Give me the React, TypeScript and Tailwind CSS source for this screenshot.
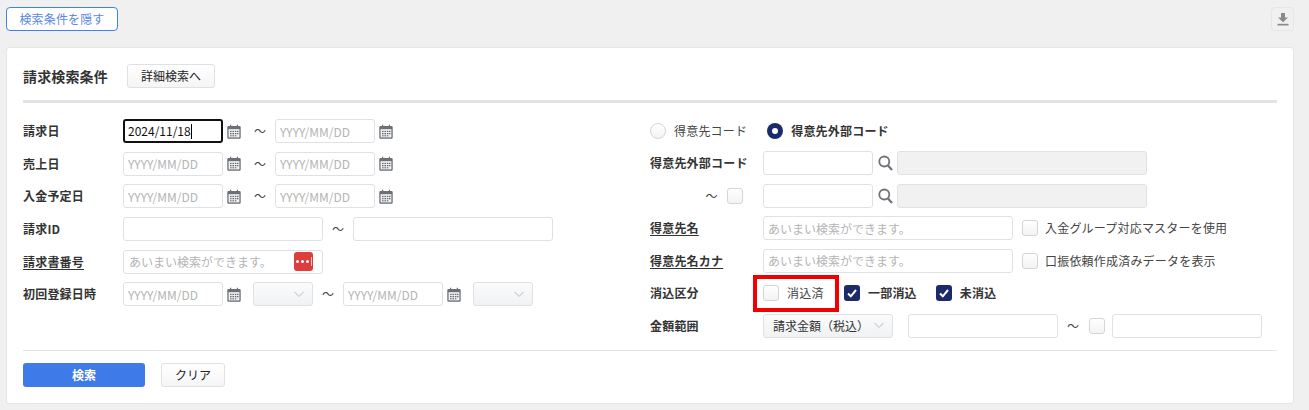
import React from "react";

const Cal = () => (
  <svg width="14" height="15" viewBox="0 0 14 15" className="block shrink-0">
    <path fill="#6b7076" d="M1.500 2H3V0.800h1.200V2h5.600V0.800H11V2h1.500A1.200 1.200 0 0 1 13.700 3.200v10.300a1.200 1.200 0 0 1-1.200 1.200h-11A1.200 1.200 0 0 1 .3 13.500V3.200A1.200 1.200 0 0 1 1.500 2z" />
    <rect x="1.600" y="5.200" width="10.800" height="8.200" fill="#f4f4f4" />
    <g fill="#6b7076">
      <rect x="3" y="6.800" width="1.600" height="1.300" /><rect x="5.400" y="6.800" width="1.600" height="1.300" /><rect x="7.800" y="6.800" width="1.600" height="1.300" /><rect x="10" y="6.800" width="1.500" height="1.300" />
      <rect x="3" y="9" width="1.600" height="1.300" /><rect x="5.400" y="9" width="1.600" height="1.300" /><rect x="7.800" y="9" width="1.600" height="1.300" /><rect x="10" y="9" width="1.500" height="1.300" />
      <rect x="3" y="11.200" width="1.600" height="1.200" /><rect x="5.400" y="11.200" width="1.600" height="1.200" /><rect x="7.800" y="11.200" width="1.600" height="1.200" />
    </g>
  </svg>
);

const Chevron = () => (
  <svg width="12" height="7" viewBox="0 0 12 7" fill="none" stroke="#cdd3dc" strokeWidth="1.200"><path d="M1.500 1 6 5.500 10.500 1" /></svg>
);

const Loupe = () => (
  <svg width="15" height="16" viewBox="0 0 15 16" fill="none" stroke="#6f7378" strokeWidth="1.800" className="block shrink-0"><circle cx="6.300" cy="6.500" r="5" /><path d="m10 10.500 4 4.500" strokeWidth="2.200" /></svg>
);

const Tilde = ({ className = "" }: { className?: string }) => (
  <span className={`shrink-0 text-center text-[12px] leading-none text-[#444] ${className}`}>～</span>
);

const Input = ({ w, ph, bg = "bg-white", className = "" }: { w: string; ph?: string; bg?: string; className?: string }) => (
  <input
    readOnly
    placeholder={ph}
    className={`${w} ${bg} ${className} h-6 shrink-0 rounded-[3px] border border-[#dfe1e5] px-[4px] text-xs outline-none placeholder:text-[#b4b4b4]`}
  />
);

const Label = ({ children, u, w = "w-[100px]" }: { children: React.ReactNode; u?: boolean; w?: string }) => (
  <span className={`${w} shrink-0 text-xs font-bold tracking-[0.2px] text-[#333] ${u ? "underline underline-offset-2" : ""}`}>{children}</span>
);

const Select = ({ w, text, className = "" }: { w: string; text?: string; className?: string }) => (
  <div className={`${w} ${className} flex h-6 shrink-0 items-center justify-between rounded-[3px] border border-[#dfe1e5] bg-gradient-to-b from-[#fbfbfc] to-[#f1f2f4] pl-[9px] pr-[7px] text-xs text-[#333]`}>
    <span>{text}</span>
    <Chevron />
  </div>
);

const Box = ({ checked, className = "" }: { checked?: boolean; className?: string }) =>
  checked ? (
    <span className={`${className} flex h-4 w-4 shrink-0 items-center justify-center rounded-[3px] bg-[#1b2a6b]`}>
      <svg width="10" height="9" viewBox="0 0 10 9" fill="none" stroke="#fff" strokeWidth="2"><path d="M1 4.500 3.800 7.300 9 1" /></svg>
    </span>
  ) : (
    <span className={`${className} block h-4 w-4 shrink-0 rounded-[3px] border border-[#d3d5d9] bg-gradient-to-b from-white to-[#f3f3f4]`} />
  );

const Text = ({ children, className = "ml-2" }: { children: React.ReactNode; className?: string }) => (
  <span className={`${className} text-xs tracking-[0.2px] text-[#444]`}>{children}</span>
);

const Strong = ({ children }: { children: React.ReactNode }) => (
  <span className="ml-2 text-xs font-bold tracking-[0.2px] text-[#333]">{children}</span>
);

const DateRange = ({ first }: { first?: boolean }) => (
  <>
    {first ? (
      <div className="flex h-6 w-[100px] shrink-0 items-center rounded-[3px] border-2 border-[#111] bg-white pl-[3px] text-xs text-[#111]">
        2024/11/18<span className="h-[15px] w-px bg-black" />
      </div>
    ) : (
      <Input w="w-[100px]" ph="YYYY/MM/DD" />
    )}
    <span className="ml-1"><Cal /></span>
    <Tilde className="ml-[12px] w-[14px]" />
    <Input w="w-[100px]" ph="YYYY/MM/DD" className="ml-[8px]" />
    <span className="ml-1"><Cal /></span>
  </>
);

const Row = ({ children }: { children: React.ReactNode }) => <div className="flex h-6 items-center">{children}</div>;

export default function App() {
  return (
    <div className="min-h-[410px] bg-[#f0f0f0] px-[6px] pt-[7px] text-[#333] [font-family:'Noto_Sans_CJK_JP','Noto_Sans',sans-serif]">
      <div className="flex items-center justify-between pr-[9px]">
        <button className="flex h-6 w-[112px] items-center justify-center rounded-[4px] border border-[#3f82ee] bg-white text-xs tracking-[0.15px] text-[#5b87e0]">検索条件を隠す</button>
        <button className="flex h-6 w-[23px] items-center justify-center rounded-[4px] border border-[#e6e6e6] bg-[#f0f0f0]">
          <svg width="12" height="13" viewBox="0 0 12 13" fill="#8a8a8a"><path d="M4 0h4v4.500h3L6 9.300 1 4.500h3z" /><rect x="0.500" y="10.800" width="11" height="1.700" /></svg>
        </button>
      </div>

      <div className="mt-4 h-[357px] w-[1288px] rounded-[3px] border border-[#e2e5ec] bg-white px-4">
        <div className="flex items-center pt-4">
          <span className="text-sm font-bold tracking-[0.15px] text-[#333]">請求検索条件</span>
          <button className="ml-[19px] h-6 w-[88px] rounded-[3px] border border-[#dfe1e5] bg-gradient-to-b from-white to-[#f5f5f6] text-xs text-[#222]">詳細検索へ</button>
        </div>
        <div className="mt-3 h-[3px] bg-[#e3e3e3]" />

        <div className="flex pt-4">
          <div className="mt-[0.3px] flex w-[627px] shrink-0 flex-col gap-[8.600px]">
            <Row><Label>請求日</Label><DateRange first /></Row>
            <Row><Label>売上日</Label><DateRange /></Row>
            <Row><Label>入金予定日</Label><DateRange /></Row>
            <Row>
              <Label>請求ID</Label>
              <Input w="w-[200px]" />
              <Tilde className="ml-[9px] w-[12px]" />
              <Input w="w-[200px]" className="ml-[9px]" />
            </Row>
            <Row>
              <Label u>請求書番号</Label>
              <div className="flex h-6 w-[200px] items-center justify-between rounded-[3px] border border-[#dfe1e5] pl-[5px] pr-[9px] text-xs text-[#b4b4b4]">
                <span>あいまい検索ができます。</span>
                <span className="flex h-[19px] w-[19px] items-center justify-center gap-[2px] rounded-[3px] bg-[#dc3d3d]">
                  <span className="h-[3px] w-[3px] rounded-full bg-white" /><span className="h-[3px] w-[3px] rounded-full bg-white" /><span className="h-[3px] w-[3px] rounded-full bg-white" /><span className="h-[9px] w-[1px] bg-[#f3c4c4]" />
                </span>
              </div>
            </Row>
            <Row>
              <Label>初回登録日時</Label>
              <Input w="w-[100px]" ph="YYYY/MM/DD" />
              <span className="ml-1"><Cal /></span>
              <Select w="w-[60px]" className="ml-3" />
              <Tilde className="ml-[9px] w-[12px]" />
              <Input w="w-[100px]" ph="YYYY/MM/DD" className="ml-[9px]" />
              <span className="ml-1"><Cal /></span>
              <Select w="w-[60px]" className="ml-3" />
            </Row>
          </div>

          <div className="-mt-[0.4px] flex flex-1 flex-col gap-[8.500px]">
            <Row>
              <span className="h-4 w-4 rounded-full border border-[#d3d5d9] bg-gradient-to-b from-white to-[#f3f3f4]" />
              <Text>得意先コード</Text>
              <span className="ml-[20px] flex h-4 w-4 items-center justify-center rounded-full bg-[#1b2a6b]"><span className="h-[6px] w-[6px] rounded-full bg-white" /></span>
              <Strong>得意先外部コード</Strong>
            </Row>
            <Row>
              <Label w="w-[113px]">得意先外部コード</Label>
              <Input w="w-[110px]" />
              <span className="ml-[5px]"><Loupe /></span>
              <Input w="w-[250px]" bg="bg-[#f1f1f1]" className="ml-1" />
            </Row>
            <Row>
              <Tilde className="ml-[55px] w-[13px]" />
              <Box className="ml-[9px]" />
              <Input w="w-[110px]" className="ml-5" />
              <span className="ml-[5px]"><Loupe /></span>
              <Input w="w-[250px]" bg="bg-[#f1f1f1]" className="ml-1" />
            </Row>
            <Row>
              <Label u w="w-[113px]">得意先名</Label>
              <Input w="w-[250px]" ph="あいまい検索ができます。" />
              <Box className="ml-[9px]" />
              <Text className="ml-[7px]">入金グループ対応マスターを使用</Text>
            </Row>
            <Row>
              <Label u w="w-[113px]">得意先名カナ</Label>
              <Input w="w-[250px]" ph="あいまい検索ができます。" />
              <Box className="ml-[9px]" />
              <Text className="ml-[7px]">口振依頼作成済みデータを表示</Text>
            </Row>
            <Row>
              <Label w="w-[103px]">消込区分</Label>
              <div className="flex h-[37px] w-[86px] shrink-0 items-center border-4 border-[#f00000] pl-[6px]">
                <Box />
                <Text>消込済</Text>
              </div>
              <Box checked className="ml-[5px]" />
              <Strong>一部消込</Strong>
              <Box checked className="ml-[19px]" />
              <Strong>未消込</Strong>
            </Row>
            <Row>
              <Label w="w-[113px]">金額範囲</Label>
              <Select w="w-[130px]" text="請求金額（税込）" />
              <Input w="w-[150px]" className="ml-[15px]" />
              <Tilde className="ml-[9px] w-[12px]" />
              <Box className="ml-[10px]" />
              <Input w="w-[150px]" className="ml-[7px]" />
            </Row>
          </div>
        </div>

        <div className="mt-3 h-px bg-[#e3e3e3]" />
        <div className="mt-3 flex gap-4">
          <button className="h-6 w-[122px] rounded-[3px] bg-[#3f7be8] text-xs font-bold text-white">検索</button>
          <button className="h-6 w-[64px] rounded-[3px] border border-[#dfe1e5] bg-gradient-to-b from-white to-[#f5f5f6] text-xs text-[#222]">クリア</button>
        </div>
      </div>
    </div>
  );
}
